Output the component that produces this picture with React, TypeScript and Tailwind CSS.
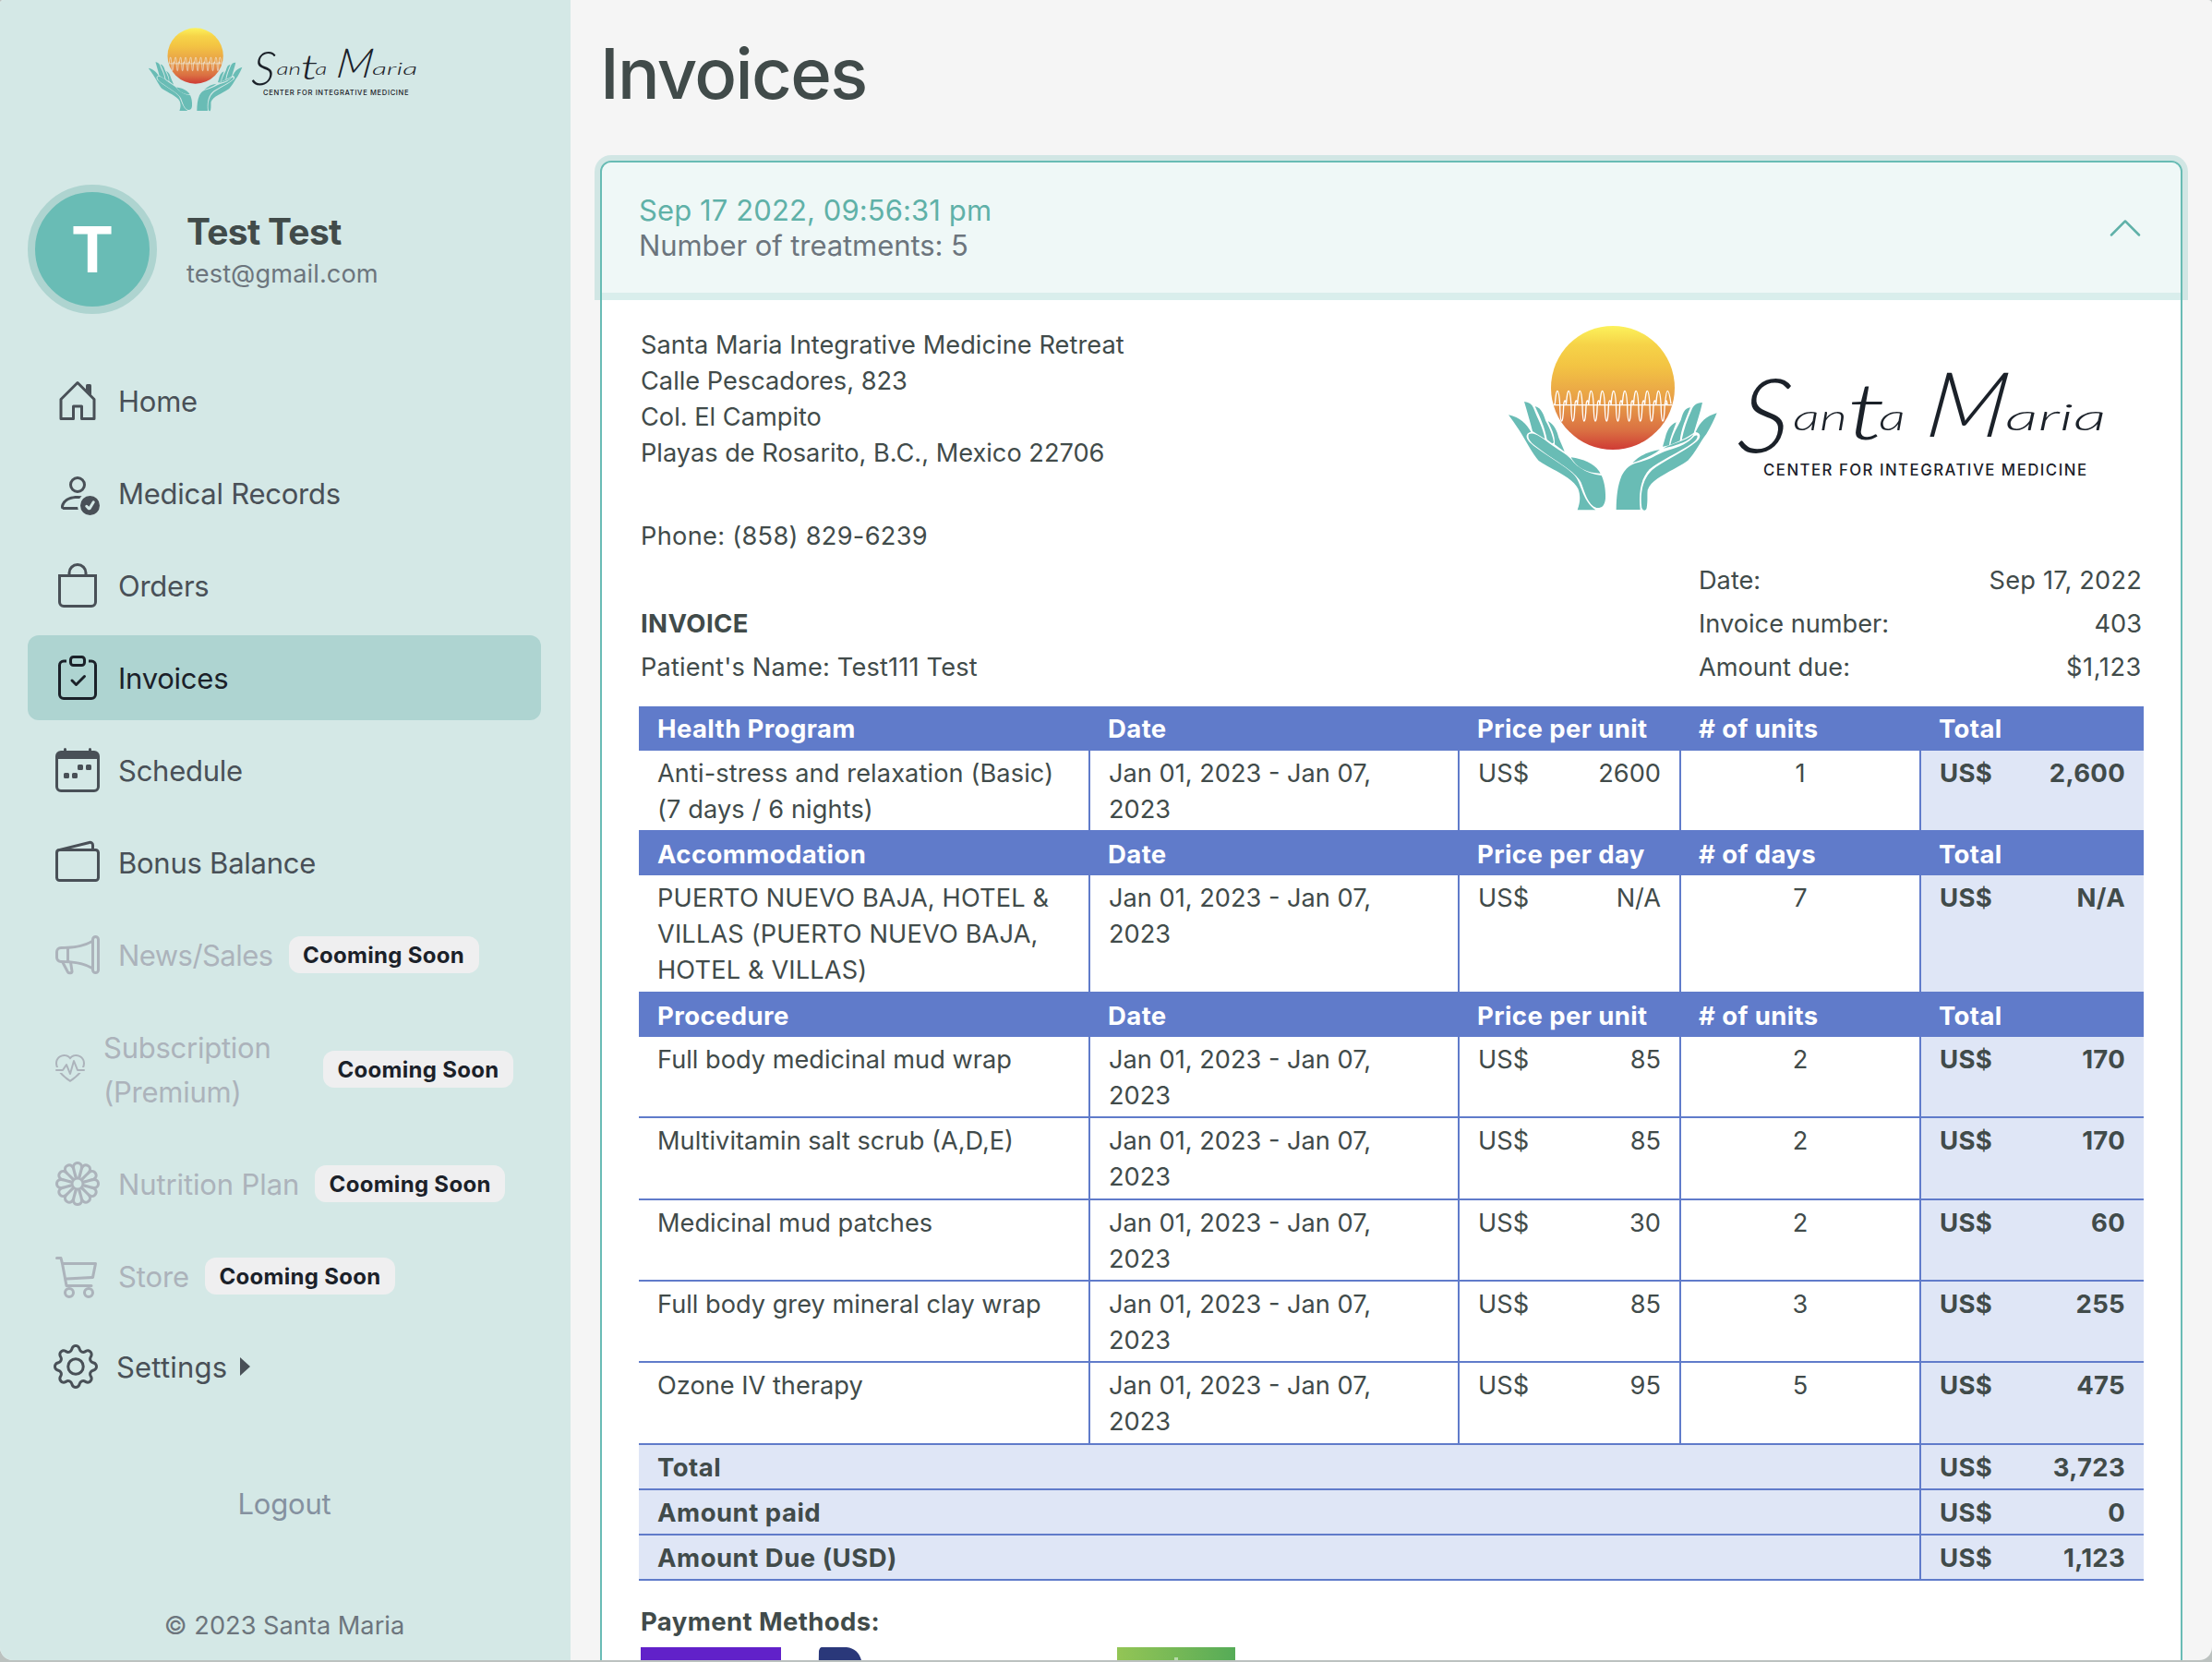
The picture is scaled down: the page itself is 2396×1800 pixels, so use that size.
import React from 'react';
import {
  BsPersonCheck,
  BsBag,
  BsClipboardCheck,
  BsCalendarWeek,
  BsWallet2,
  BsMegaphone,
  BsHeartPulse,
  BsFlower1,
  BsCart3,
  BsGear,
  BsChevronUp,
} from 'react-icons/bs';

const peaks = Array.from({ length: 10 }, (_, i) => 202 + i * 36.5);

const wave =
  'M190 295' +
  peaks
    .map(
      (p) =>
        `L${p - 9} 292C${p - 5} 236 ${p + 3} 236 ${p + 7} 294C${p + 8} 365 ${p + 17} 365 ${p + 19} 300C${p + 20} 276 ${p + 26} 278 ${p + 27} 292`,
    )
    .join('') +
  'L551 292C555 236 562 236 570 292';

function Logo({ id, className, line }: { id: string; className: string; line: string }) {
  return (
    <svg viewBox="0 0 720 240" className={className} aria-label="Santa Maria">
      <defs>
        <linearGradient id={id} x1="0" y1="0" x2="0" y2="1">
          <stop offset="0" stopColor="#fcf25b" />
          <stop offset="0.15" stopColor="#f6d348" />
          <stop offset="0.32" stopColor="#f3c443" />
          <stop offset="0.62" stopColor="#e79c48" />
          <stop offset="0.85" stopColor="#da6f42" />
          <stop offset="1" stopColor="#cf3b35" />
        </linearGradient>
      </defs>
      <g transform="translate(20 10) scale(0.33333)">
        <circle cx="381" cy="240" r="201" fill={`url(#${id})`} />
        <path d="M188 296H574" stroke={line} strokeWidth="4" />
        <path d={wave} fill="none" stroke={line} strokeWidth="4" />
        <g fill="#69bcb5">
          <path d="M42 328C80 336 100 358 115 383C98 386 96 402 110 416C150 455 240 497 262 532C280 560 285 610 325 637L266 637C276 610 276 590 268 568C250 530 180 505 140 477C120 455 95 405 77 378C65 360 52 342 42 328Z" />
          <path d="M108 391C125 382 150 402 175 421C200 440 230 455 245 472C265 500 300 519 344 525C354 545 358 575 357 600C354 625 345 631 328 630C300 620 290 580 278 548C262 515 200 480 165 455C135 432 98 412 108 391Z" />
          <path d="M245 466C290 472 325 490 341 518C300 518 262 500 245 466Z" />
          <path d="M93 285C108 287 118 293 123 305C138 345 155 370 160 406L120 381C112 350 102 315 93 285Z" />
          <path d="M128 300C150 305 157 330 163 348C178 375 187 400 189 418L184 421L167 408C160 370 145 335 128 300Z" />
          <path d="M170 348C190 358 200 380 205 402C212 420 220 435 224 448L192 424C194 395 180 370 170 348Z" />
          <path d="M392 636C393 590 396 560 410 525C430 488 450 487 480 478C510 468 530 453 560 443C600 433 625 420 646 397C660 387 660 406 640 419C600 448 530 478 500 505C472 535 464 580 470 636Z" />
          <path d="M719 322C685 332 665 350 650 384C670 386 666 405 654 414C610 450 540 480 508 508C480 535 468 580 475 630C480 642 489 640 491 630C495 605 492 590 494 572C510 530 570 515 625 476C650 450 665 415 685 390C700 365 710 345 719 322Z" />
          <path d="M445 484C470 458 500 446 534 441C510 462 480 470 445 484Z" />
          <path d="M672 288C650 288 642 300 637 312C622 345 612 375 605 409C620 402 635 392 644 386C655 350 665 320 672 288Z" />
          <path d="M633 304C613 306 608 325 602 345C590 370 576 390 568 425L599 412C603 375 618 340 633 304Z" />
          <path d="M587 352C565 362 557 380 552 400L543 431L564 427C567 400 580 375 587 352Z" />
          <path d="M545 437C575 420 615 415 643 391C635 412 590 428 545 437Z" />
        </g>
      </g>
      <g fill="#1b2129" fontFamily="Lato, sans-serif" fontStyle="italic" fontWeight="300">
        <text transform="translate(280 160) skewX(-6)" fontSize="112">
          S
        </text>
        <text transform="translate(342 136) scale(1.45 1)" fontSize="40">
          an
          <tspan dy="10" fontSize="84" letterSpacing="-5">t</tspan>
          <tspan dy="-10">a</tspan>
        </text>
        <text transform="translate(484 143) skewX(-8) scale(1.05 1)" fontSize="98">
          M
        </text>
        <text transform="translate(572 136) scale(1.78 1)" fontSize="40">
          aria
        </text>
      </g>
      <text
        x="310"
        y="184.500"
        fill="#1b2129"
        fontFamily="Inter, sans-serif"
        fontWeight="500"
        fontSize="16.800"
        textLength="350"
      >
        CENTER FOR INTEGRATIVE MEDICINE
      </text>
    </svg>
  );
}

function HouseIcon({ className }: { className?: string }) {
  return (
    <svg viewBox="0 0 16 16" fill="currentColor" className={className}>
      <path
        fillRule="evenodd"
        d="M7.646 1.146a.5.5 0 0 1 .708 0l6 6a.5.5 0 0 1 .146.354v7a.5.5 0 0 1-.5.5H9.500a.5.5 0 0 1-.5-.5v-4H7v4a.5.5 0 0 1-.5.5H2a.5.5 0 0 1-.5-.5v-7a.5.5 0 0 1 .146-.354l6-6zM2.500 7.707V14H6v-4a.5.5 0 0 1 .5-.5h3a.5.5 0 0 1 .5.5v4h3.500V7.707L8 2.207l-5.500 5.500z"
      />
      <path d="M13 2.500V6l-2-2V2.500a.5.5 0 0 1 .5-.5h1a.5.5 0 0 1 .5.5z" />
    </svg>
  );
}

type IconType = React.ComponentType<{ className?: string }>;

const navItems: { label: string; icon: IconType; active?: boolean }[] = [
  { label: 'Home', icon: HouseIcon },
  { label: 'Medical Records', icon: BsPersonCheck },
  { label: 'Orders', icon: BsBag },
  { label: 'Invoices', icon: BsClipboardCheck, active: true },
  { label: 'Schedule', icon: BsCalendarWeek },
  { label: 'Bonus Balance', icon: BsWallet2 },
];

function SoonBadge() {
  return (
    <span className="flex h-[40px] w-[206px] shrink-0 items-center justify-center rounded-[12px] bg-[#efeff0] pt-px text-[24px] leading-none font-bold tracking-[0.3px] text-[#1b2129]">
      Cooming Soon
    </span>
  );
}

function SoonItem({ label, icon: Icon, spacing }: { label: string; icon: IconType; spacing: string }) {
  return (
    <li className="flex h-[92px] items-center pl-[30px] text-[#acb3bb]">
      <Icon className="size-[48px] shrink-0" />
      <span className={`mr-[17px] ml-[20px] pt-[2px] ${spacing}`}>{label}</span>
      <SoonBadge />
    </li>
  );
}

function Sidebar() {
  return (
    <aside className="flex w-[618px] shrink-0 flex-col bg-[#d4e8e6] px-[30px]">
      <Logo id="sun-small" line="#f0f6f5" className="mt-[20px] ml-[115px] h-[108px] w-[325px]" />
      <div className="mt-[72px] flex h-[140px] items-center">
        <div className="flex size-[140px] items-center justify-center rounded-full border-[8px] border-[#aed4d0] bg-[#69bcb5] text-[69px] leading-none font-bold text-white">
          T
        </div>
        <div className="ml-[32px] pt-[5px]">
          <div className="text-[39px] leading-[48px] font-bold tracking-[-0.7px] text-[#414b4a]">Test Test</div>
          <div className="text-[27.200px] leading-[44px] tracking-[0.100px] text-[#6c757d]">test@gmail.com</div>
        </div>
      </div>
      <ul className="mt-[48px] flex flex-col gap-2 text-[31px] leading-[48px] tracking-[-0.25px] text-[#495057]">
        {navItems.map(({ label, icon: Icon, active }) => (
          <li
            key={label}
            className={
              active
                ? 'flex h-[92px] w-[556px] items-center rounded-[12px] bg-[#aed4d1] pl-[30px] text-[#1b2129]'
                : 'flex h-[92px] w-[556px] items-center pl-[30px]'
            }
          >
            <Icon className="size-[48px] shrink-0" />
            <span className="ml-[20px] pt-[2px]">{label}</span>
          </li>
        ))}
        <SoonItem label="News/Sales" icon={BsMegaphone} spacing="tracking-[-0.550px]" />
        <li className="flex h-[140px] w-[556px] items-center px-[30px] text-[#acb3bb]">
          <BsHeartPulse className="size-[32px] shrink-0" />
          <span className="ml-[20px] flex-1 pt-px">
            Subscription
            <br />
            (Premium)
          </span>
          <SoonBadge />
        </li>
        <SoonItem label="Nutrition Plan" icon={BsFlower1} spacing="tracking-[-0.120px]" />
        <SoonItem label="Store" icon={BsCart3} spacing="tracking-[-0.100px]" />
        <li className="flex h-[88px] items-center pl-[28px]">
          <BsGear className="size-[48px] shrink-0" />
          <span className="ml-[20px] pt-px tracking-[0.2px]">Settings</span>
          <span className="ml-[14px] border-y-[10.500px] border-l-[11px] border-y-transparent border-l-[#495057]" />
        </li>
      </ul>
      <div className="mt-[81px] pr-[2px] text-center text-[31px] leading-[48px] tracking-[-0.2px] text-[#8591a0]">
        Logout
      </div>
      <div className="mt-[88px] pr-[2px] text-center text-[27.200px] leading-[40px] text-[#6c757d]">
        © 2023 Santa Maria
      </div>
    </aside>
  );
}

const COLS = 'grid grid-cols-[487px_400px_240px_260px_243px]';

function HeadRow({ cells, first }: { cells: string[]; first?: boolean }) {
  return (
    <div
      className={`${COLS} bg-[#607bca] text-[27.500px] font-bold tracking-[0.4px] text-white ${
        first ? 'h-[48px] pt-[5px]' : 'h-[49px] pt-[6.500px]'
      }`}
    >
      {cells.map((c, i) => (
        <div key={i} className={i === 0 ? 'pl-[20px]' : 'pl-[21px]'}>
          {c}
        </div>
      ))}
    </div>
  );
}

function Money({ value }: { value: string }) {
  return (
    <div className="flex justify-between">
      <span>US$</span>
      <span>{value}</span>
    </div>
  );
}

function ItemRow({
  name,
  price,
  count,
  total,
  height,
}: {
  name: React.ReactNode;
  price: string;
  count: string;
  total: string;
  height: string;
}) {
  return (
    <div className={`${COLS} border-[#607bca] ${height}`}>
      <div className="pt-[4.500px] pl-[20px]">{name}</div>
      <div className="border-l-2 border-[#607bca] pt-[4.500px] pl-[20px]">
        Jan 01, 2023 - Jan 07,
        <br />
        2023
      </div>
      <div className="border-l-2 border-[#607bca] px-[20px] pt-[4.500px]">
        <Money value={price} />
      </div>
      <div className="border-l-2 border-[#607bca] pt-[4.500px] text-center">{count}</div>
      <div className="border-l-2 border-[#607bca] bg-[#dfe6f6] px-[20px] pt-[4.500px] text-[27.500px] font-bold tracking-[0.300px]">
        <Money value={total} />
      </div>
    </div>
  );
}

const procedures = [
  { name: 'Full body medicinal mud wrap', price: '85', count: '2', total: '170', height: 'h-[88px] border-b-2' },
  { name: 'Multivitamin salt scrub (A,D,E)', price: '85', count: '2', total: '170', height: 'h-[89px] border-b-2' },
  { name: 'Medicinal mud patches', price: '30', count: '2', total: '60', height: 'h-[88px] border-b-2' },
  { name: 'Full body grey mineral clay wrap', price: '85', count: '3', total: '255', height: 'h-[88px] border-b-2' },
  { name: 'Ozone IV therapy', price: '95', count: '5', total: '475', height: 'h-[89px] border-b-2' },
];

const totals = [
  ['Total', '3,723'],
  ['Amount paid', '0'],
  ['Amount Due (USD)', '1,123'],
];

function InvoiceTable() {
  return (
    <div className="w-[1630px]">
      <HeadRow first cells={['Health Program', 'Date', 'Price per unit', '# of units', 'Total']} />
      <ItemRow
        name={
          <span className="tracking-[0.100px]">
            Anti-stress and relaxation (Basic)
            <br />
            (7 days / 6 nights)
          </span>
        }
        price="2600"
        count="1"
        total="2,600"
        height="h-[86px]"
      />
      <HeadRow cells={['Accommodation', 'Date', 'Price per day', '# of days', 'Total']} />
      <ItemRow
        name={
          <span className="tracking-[0.150px]">
            PUERTO NUEVO BAJA, HOTEL &amp;
            <br />
            VILLAS (PUERTO NUEVO BAJA,
            <br />
            HOTEL &amp; VILLAS)
          </span>
        }
        price="N/A"
        count="7"
        total="N/A"
        height="h-[126px]"
      />
      <HeadRow cells={['Procedure', 'Date', 'Price per unit', '# of units', 'Total']} />
      {procedures.map((p) => (
        <ItemRow key={p.name} {...p} />
      ))}
      {totals.map(([label, value]) => (
        <div
          key={label}
          className="grid h-[49px] grid-cols-[1387px_243px] border-b-2 border-[#607bca] bg-[#dfe6f6] text-[27.500px] font-bold"
        >
          <div className="pt-[5px] pl-[20px] tracking-[0.5px]">{label}</div>
          <div className="border-l-2 border-[#607bca] px-[20px] pt-[5px] tracking-[0.300px]">
            <Money value={value} />
          </div>
        </div>
      ))}
    </div>
  );
}

function Invoice() {
  return (
    <section className="mt-[49px] h-[1700px] rounded-[12px] border-2 border-[#69bcb5] bg-white">
      <div className="flex h-[141px] items-center justify-between rounded-t-[10px] bg-[#eff8f7] px-[40px] shadow-[0_0_0_8px_rgba(105,188,181,0.25)]">
        <div className="pt-px text-[31px] leading-[38.400px]">
          <div className="tracking-[0.100px] text-[#5fb1a8]">Sep 17 2022, 09:56:31 pm</div>
          <div className="tracking-[-0.080px] text-[#6c757d]">Number of treatments: 5</div>
        </div>
        <BsChevronUp className="size-[40px] text-[#5fb1a8]" />
      </div>
      <div className="px-[40px] text-[27.200px] leading-[39.200px] text-[#414b4a]">
        <div className="flex h-[288px] justify-between">
          <div className="pt-[36.500px] pl-[2px]">
            <p className="tracking-[0.050px]">Santa Maria Integrative Medicine Retreat</p>
            <p>Calle Pescadores, 823</p>
            <p>Col. El Campito</p>
            <p>Playas de Rosarito, B.C., Mexico 22706</p>
            <p className="mt-[51px] tracking-[0.300px]">Phone: (858) 829-6239</p>
          </div>
          <Logo id="sun-large" line="#ffffff" className="mt-[13px] mr-[2px] h-[240px] w-[720px] shrink-0" />
        </div>
        <div className="flex h-[160px] justify-between">
          <div className="pt-[47px] pl-[2px] leading-[47px]">
            <p className="text-[27.500px] font-bold tracking-[0.400px]">INVOICE</p>
            <p className="tracking-[0.180px]">Patient&apos;s Name: Test111 Test</p>
          </div>
          <div className="mr-[2px] w-[480px] leading-[47px]">
            <div className="flex justify-between">
              <span>Date:</span>
              <span className="tracking-[0.200px]">Sep 17, 2022</span>
            </div>
            <div className="flex justify-between">
              <span>Invoice number:</span>
              <span>403</span>
            </div>
            <div className="flex justify-between">
              <span>Amount due:</span>
              <span className="tracking-[0.600px]">$1,123</span>
            </div>
          </div>
        </div>
        <InvoiceTable />
        <p className="mt-[25px] pl-[2px] text-[27.500px] font-bold tracking-[0.400px]">Payment Methods:</p>
        <div className="mt-[8px] flex h-[60px] items-start pl-[2px]">
          <div className="h-[60px] w-[152px] bg-[#6121c9]" />
          <svg viewBox="0 0 50 60" className="ml-[40px] h-[60px] w-[50px]">
            <path d="M4 0H31C42 1 48 10 48 22C48 36 38 42 20 42L16 60H0L1 4Q2 0 4 0Z" fill="#2a387a" />
          </svg>
          <div className="ml-[274px] flex h-[60px] w-[128px] justify-center bg-linear-to-r from-[#93c555] to-[#55ab57]">
            <span className="mt-[11px] h-[20px] w-[4px] bg-[#b7dbaa]" />
          </div>
        </div>
      </div>
    </section>
  );
}

export default function App() {
  return (
    <div className="h-[1800px] w-[2396px] overflow-hidden bg-[#bcc2c0] font-[Inter,sans-serif]">
      <div className="flex h-[1798px] overflow-hidden rounded-t-[4px] rounded-b-[14px] bg-[#f5f5f5]">
        <Sidebar />
        <main className="w-[1746px] shrink-0 pt-[33px] pl-[32px]">
          <h1 className="text-[76px] leading-[92px] font-[540] tracking-[-1.700px] text-[#414b4a]">Invoices</h1>
          <Invoice />
        </main>
      </div>
    </div>
  );
}
